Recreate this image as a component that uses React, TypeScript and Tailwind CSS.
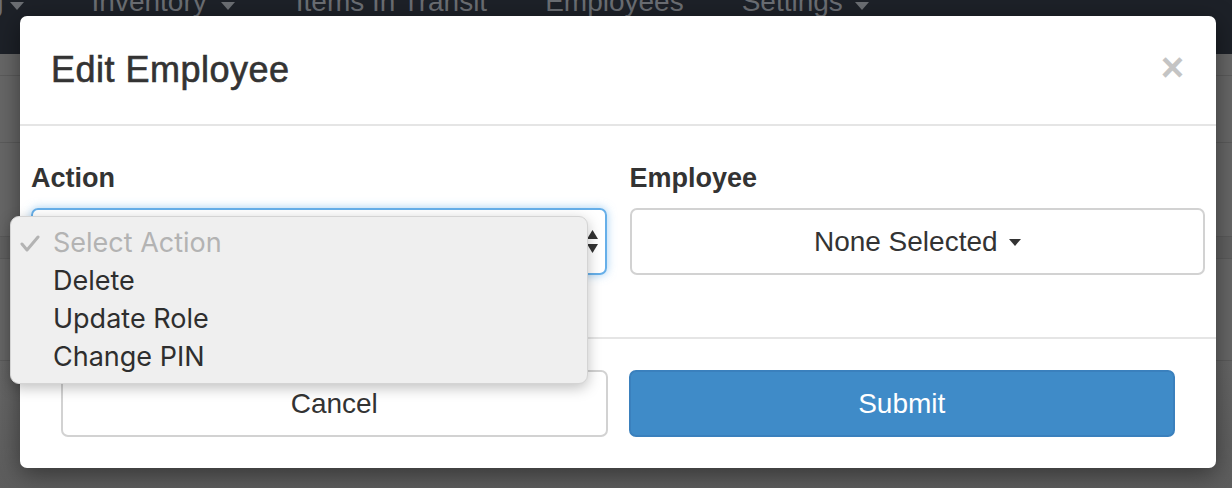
import React from "react";

const Caret = ({ className = "" }: { className?: string }) => (
  <svg width="14" height="8" viewBox="0 0 14 8" className={className}>
    <polygon points="0,0 14,0 7,8" fill="currentColor" />
  </svg>
);

export default function App() {
  const helv = { fontFamily: '"Liberation Sans", Arial, sans-serif' };
  const sf = { fontFamily: 'Inter, "Noto Sans", sans-serif' };
  return (
    <div className="relative w-[1232px] h-[488px] overflow-hidden bg-[#676767]" style={helv}>
      {/* background page */}
      <div className="flex flex-col w-full h-full">
        <div className="h-[54px] bg-[#1d2128] flex items-start text-[28px] text-[#6b6e73] leading-[28px]">
          <div className="flex items-center -mt-[12px]">
            <span className="-ml-[12px]">g</span>
            <Caret className="ml-[6px] mt-[8px] text-[#6b6e73]" />
            <span className="ml-[68px]">Inventory</span>
            <Caret className="ml-[14px] mt-[8px]" />
            <span className="ml-[61px]">Items In Transit</span>
            <span className="ml-[58px]">Employees</span>
            <span className="ml-[58px]">Settings</span>
            <Caret className="ml-[12px] mt-[8px]" />
          </div>
        </div>
        <div className="h-[21px]" />
        <div className="h-[67px] border-t border-[#5b5b5b]" />
        <div className="h-[94px] border-t border-[#5b5b5b]" />
        <div className="h-[22px] border-t border-[#5b5b5b] bg-[#626262]" />
        <div className="h-[102px] border-t border-[#5b5b5b]" />
        <div className="flex-1 border-t border-[#5b5b5b] bg-gradient-to-b from-[#666] to-[#5d5d5d]" />
      </div>

      {/* modal */}
      <div className="absolute left-[20px] top-[16px] w-[1196px] h-[452px] bg-white rounded-[7px] shadow-[0_6px_24px_rgba(0,0,0,0.45)] flex flex-col">
        <div className="h-[110px] border-b-2 border-[#e5e5e5] flex items-center justify-between pl-[31px] pr-[32px]">
          <h4 className="text-[36px] text-[#333] font-normal tracking-[0.5px]" style={{ WebkitTextStroke: "0.6px #333" }}>
            Edit Employee
          </h4>
          <span className="text-[40px] font-bold text-[#c4c4c4] leading-none -mt-[6px]">×</span>
        </div>
        <div className="h-[213px] border-b-2 border-[#e5e5e5] grid grid-cols-2 gap-[23px] px-[11px] pt-[36px]">
          <div className="flex flex-col">
            <label className="text-[27px] leading-[32px] font-bold text-[#333] mb-[14px]">Action</label>
            <div className="h-[67px] rounded-[7px] border-2 border-[#66afe9] shadow-[0_0_10px_rgba(102,175,233,0.6)] flex items-center justify-end pr-[7px]">
              <div className="flex flex-col gap-[5px] text-[#333]">
                <svg width="11" height="9" viewBox="0 0 11 9"><polygon points="5.5,0 11,9 0,9" fill="currentColor" /></svg>
                <svg width="11" height="9" viewBox="0 0 11 9"><polygon points="0,0 11,0 5.5,9" fill="currentColor" /></svg>
              </div>
            </div>
          </div>
          <div className="flex flex-col">
            <label className="text-[27px] leading-[32px] font-bold text-[#333] mb-[14px]">Employee</label>
            <div className="h-[67px] rounded-[7px] border-2 border-[#d2d2d2] flex items-center justify-center text-[28px] text-[#333]">
              <span>None Selected</span>
              <Caret className="ml-[11px] mt-[2px] w-[12px] h-[7px]" />
            </div>
          </div>
        </div>
        <div className="flex-1 grid grid-cols-2 gap-[21px] px-[41px] py-[31px]">
          <div className="rounded-[7px] border-2 border-[#d2d2d2] flex items-center justify-center text-[28px] text-[#333] pt-[1px]">
            Cancel
          </div>
          <div className="rounded-[7px] border-2 border-[#3a80bd] bg-[#3f8bc8] flex items-center justify-center text-[28px] text-white pt-[1px]">
            Submit
          </div>
        </div>
      </div>

      {/* native select popup */}
      <div
        className="absolute left-[10px] top-[216px] w-[578px] h-[168px] rounded-[9px] bg-[#efefef] border border-[#d4d4d4] shadow-[0_4px_14px_rgba(0,0,0,0.25)] pt-[7px] text-[27px]"
        style={sf}
      >
        {[
          { t: "Select Action", sel: true },
          { t: "Delete" },
          { t: "Update Role" },
          { t: "Change PIN" },
        ].map((o) => (
          <div key={o.t} className="h-[38px] flex items-center relative pl-[42px]">
            {o.sel && (
              <svg className="absolute left-[9px] top-[11px]" width="20" height="17" viewBox="0 0 20 17">
                <polyline points="2,9 7,15 18,2" fill="none" stroke="#b3b3b3" strokeWidth="3" strokeLinecap="round" strokeLinejoin="round" />
              </svg>
            )}
            <span className={o.sel ? "text-[#b3b3b3]" : "text-[#2e2e2e]"}>{o.t}</span>
          </div>
        ))}
      </div>
    </div>
  );
}
